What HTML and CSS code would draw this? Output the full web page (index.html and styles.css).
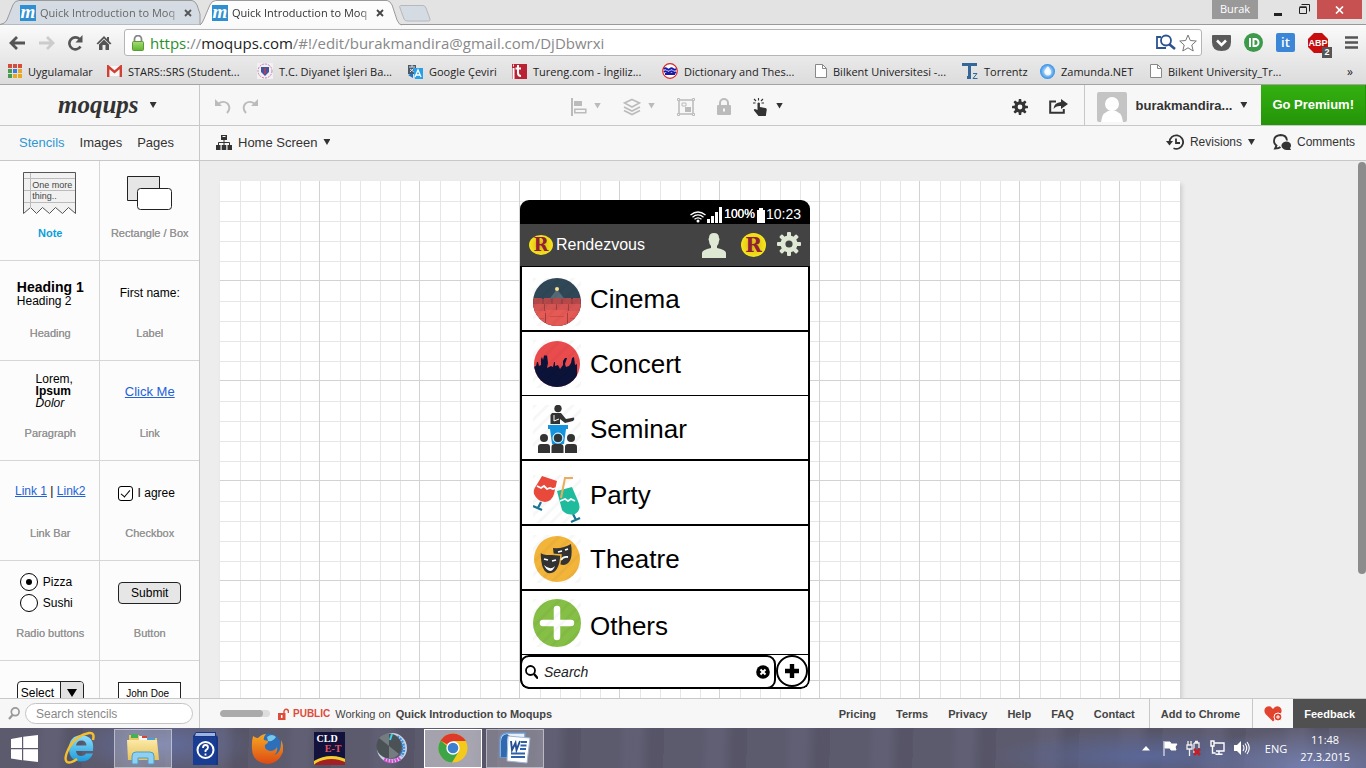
FILE: index.html
```html
<!DOCTYPE html>
<html lang="en">
<head>
<meta charset="utf-8">
<title>Quick Introduction to Moqups</title>
<link rel="stylesheet" href="styles.css">
</head>
<body>
<svg class="defs" aria-hidden="true">
  <defs>
    <linearGradient id="tabOn" x2="0" y2="1"><stop offset="0" stop-color="#fdfdfd"/><stop offset="1" stop-color="#fafafa"/></linearGradient>
    <radialGradient id="orb"><stop offset="0" stop-color="#fff"/><stop offset="1" stop-color="#2f8fe8"/></radialGradient>
    <linearGradient id="lock" x2="0" y2="1"><stop offset="0" stop-color="#a5dc78"/><stop offset="1" stop-color="#5fb62d"/></linearGradient>
    <linearGradient id="folder" x2="0" y2="1"><stop offset="0" stop-color="#fbe9a6"/><stop offset="1" stop-color="#e8c35c"/></linearGradient>
    <linearGradient id="iegrad" x2="0" y2="1"><stop offset="0" stop-color="#8fe0fb"/><stop offset="1" stop-color="#1b9bdc"/></linearGradient>
    <linearGradient id="ffgrad" x2="0" y2="1"><stop offset="0" stop-color="#f7a823"/><stop offset="1" stop-color="#dc4a14"/></linearGradient>
    <clipPath id="disc"><circle cx="24" cy="24" r="24"/></clipPath>
    <clipPath id="disc2"><circle cx="24" cy="24" r="23"/></clipPath>
    <pattern id="stripes" width="9" height="9" patternUnits="userSpaceOnUse" patternTransform="rotate(45)"><rect width="3" height="9" fill="#000" opacity=".03"/></pattern>
    <symbol id="page" viewBox="0 0 12 14"><path d="M.5.5h7l4 4v9H.5z" fill="#fff" stroke="#888"/><path d="M7.500.5v4h4" fill="none" stroke="#888"/></symbol>
    <symbol id="gear" viewBox="0 0 24 24"><g fill="currentColor"><rect x="10" width="4" height="24" rx="1"/><rect y="10" width="24" height="4" rx="1"/><rect x="10" width="4" height="24" rx="1" transform="rotate(45 12 12)"/><rect x="10" width="4" height="24" rx="1" transform="rotate(-45 12 12)"/></g><circle cx="12" cy="12" r="6" fill="none" stroke="currentColor" stroke-width="5"/><circle cx="12" cy="12" r="3.600" fill="var(--hole)"/></symbol>
  </defs>
</svg>

<header class="browser">
  <div class="tabstrip">
    <div class="tab">
      <svg class="tab-shape" viewBox="0 0 202 25" preserveAspectRatio="none"><path d="M0 24.500Q5 24 7 20L13 5Q15 .5 19 .5H194Q197 1 199 5L202 14V24.500" fill="#d5dbe3" stroke="#999"/></svg>
      <span class="favicon">m</span><span class="tab-title">Quick Introduction to Moq</span><button class="tab-x" aria-label="Close tab"><svg width="8" height="8" viewBox="0 0 8 8"><path d="M1 1l6 6M7 1L1 7" stroke="#555" stroke-width="1.800"/></svg></button>
    </div>
    <div class="tab tab-on">
      <svg class="tab-shape" viewBox="0 0 202 25" preserveAspectRatio="none"><path d="M0 25Q2 24 4 19L10 5Q12 .5 16 .5H189Q192 1 194 5L199 20Q201 25 204 25" fill="url(#tabOn)" stroke="#999"/></svg>
      <span class="favicon">m</span><span class="tab-title">Quick Introduction to Moq</span><button class="tab-x" aria-label="Close tab"><svg width="8" height="8" viewBox="0 0 8 8"><path d="M1 1l6 6M7 1L1 7" stroke="#444" stroke-width="1.800"/></svg></button>
    </div>
    <button class="newtab" aria-label="New tab"><svg width="34" height="17" viewBox="0 0 34 17"><path d="M2.500.5H25Q27 .5 28 3l4 11q.6 2-1.500 2H9Q7 16 6 14L2 3Q1 .5 2.500.5z" fill="#d5dbe3" stroke="#b5b8bd"/></svg></button>
    <div class="win">
      <span class="profile">Burak</span>
      <button class="wbtn" aria-label="Minimize"><svg width="8" height="12" viewBox="0 0 8 12"><path d="M0 9h8v3H0z" fill="#222"/></svg></button>
      <button class="wbtn" aria-label="Restore"><svg width="11" height="11" viewBox="0 0 11 11"><path d="M.5 3.500h7v6h-7zM.5 2.800h7M2.500.5h8v7" fill="none" stroke="#222"/></svg></button>
      <button class="wclose" aria-label="Close"><svg width="9" height="8" viewBox="0 0 9 8"><path d="M1 .5l7 7M8 .5l-7 7" stroke="#fff" stroke-width="1.700"/></svg></button>
    </div>
  </div>
  <div class="navbar">
    <button aria-label="Back"><svg width="17" height="16" viewBox="0 0 17 16"><path d="M8 2L2 8l6 6M2.500 8H16" fill="none" stroke="#555" stroke-width="2.800"/></svg></button>
    <button aria-label="Forward"><svg width="17" height="16" viewBox="0 0 17 16"><path d="M9 2l6 6-6 6M14.500 8H1" fill="none" stroke="#ccc" stroke-width="2.800"/></svg></button>
    <button aria-label="Reload"><svg width="17" height="16" viewBox="0 0 17 16"><path d="M13.500 11.500A6 6 0 1 1 12.500 4" fill="none" stroke="#555" stroke-width="2.600"/><path d="M15.500 0v7.500H8.500z" fill="#555"/></svg></button>
    <button aria-label="Home"><svg width="16" height="16" viewBox="0 0 16 16"><path d="M8 1L.5 8.500 2 9.500l6-6 6 6 1.500-1L13 6V2h-2v2z" fill="#555"/><path d="M3 9.500l5-5 5 5V15H9.500v-5h-3v5H3z" fill="#555"/></svg></button>
    <div class="omni">
      <svg width="12" height="16" viewBox="0 0 12 16"><path d="M2.500 7V4a3.500 3.500 0 0 1 7 0v3" fill="none" stroke="#888" stroke-width="1.800"/><rect x=".5" y="6.500" width="11" height="9" rx="1" fill="url(#lock)" stroke="#5a9a38"/></svg>
      <div class="url"><span class="sec">https</span>://<span class="host">moqups.com</span>/#!/edit/burakmandira@gmail.com/DjDbwrxi</div>
      <svg width="20" height="17" viewBox="0 0 20 17"><path d="M5 3H1v11h9" fill="none" stroke="#2d5290" stroke-width="1.800"/><circle cx="10" cy="6.500" r="5" fill="#fff" stroke="#2d5290" stroke-width="1.800"/><path d="M13 10l6 5" stroke="#2d5290" stroke-width="2.600"/></svg>
      <svg class="star" width="18" height="18" viewBox="0 0 18 18"><path d="M9 1l2.300 5.500 6 .5-4.500 4 1.400 6L9 13.800 3.800 17l1.400-6L.7 7l6-.5z" fill="#fff" stroke="#777"/></svg>
    </div>
    <div class="exts">
      <svg width="19" height="16" viewBox="0 0 19 16"><path d="M1 0h17q1 0 1 1v6q0 9-9.500 9T0 7V1q0-1 1-1z" fill="#5b5b5b"/><path d="M5 5.500l4.500 4.500L14 5.500" fill="none" stroke="#fff" stroke-width="2.500"/></svg>
      <svg width="19" height="19" viewBox="0 0 19 19"><circle cx="9.500" cy="9.500" r="9.500" fill="#3d9a4b"/><rect x="5" y="5" width="2" height="9" fill="#fff"/><path d="M9.500 6H11a3.500 3.500 0 0 1 0 7H9.500z" fill="none" stroke="#fff" stroke-width="2"/></svg>
      <span class="it">it</span>
      <span class="abp"><svg width="20" height="20" viewBox="0 0 20 20"><path d="M6 0h8l6 6v8l-6 6H6l-6-6V6z" fill="#c70d0d"/></svg><b>ABP</b><i>2</i></span>
      <svg class="menu" width="13" height="13" viewBox="0 0 13 13"><path d="M0 1.500h13M0 6.500h13M0 11.500h13" stroke="#555" stroke-width="2.600"/></svg>
    </div>
  </div>
  <nav class="bookmarks">
    <a href="#" class="w1"><svg width="14" height="14" viewBox="0 0 14 14"><g fill="#d34c3d"><path d="M0 0h4v4H0zM5 0h4v4H5zM10 0h4v4h-4z"/></g><path d="M0 5h4v4H0z" fill="#4a9b4f"/><path d="M5 5h4v4H5z" fill="#3b7de0"/><path d="M10 5h4v4h-4zM5 10h4v4H5zM10 10h4v4h-4z" fill="#e8a820"/><path d="M0 10h4v4H0z" fill="#4a9b4f"/></svg>Uygulamalar</a>
    <a href="#" class="w2"><svg width="15" height="12" viewBox="0 0 15 12"><path d="M2 1h11v10H2z" fill="#f7f7f7"/><path d="M1.200 12V1.500l6.300 5.500 6.300-5.500V12" fill="none" stroke="#cf4134" stroke-width="2.400"/></svg>STARS::SRS (Student...</a>
    <a href="#" class="w3"><svg width="16" height="16" viewBox="0 0 16 16"><path d="M0 0h16v16H0z" fill="#f5eef3"/><circle cx="8" cy="8" r="7" fill="none" stroke="#b88aa8" stroke-dasharray="2 1"/><path d="M4 4h8v5l-4 4-4-4z" fill="#43559b"/><path d="M7 5h2v6H7z" fill="#a14369"/></svg>T.C. Diyanet İşleri Ba...</a>
    <a href="#" class="w4"><svg width="16" height="15" viewBox="0 0 16 15"><path d="M1 1h8v9H1z" fill="#4c5a66"/><path d="M2 3h6M5 1v2M3 8l4-4M3 5l4 3" stroke="#dde" fill="none"/><path d="M1 11l5 3V9z" fill="#1b72c8"/><path d="M6 4h10v11H8z" fill="#2aa1e6"/><path d="M8 13l3-7 3 7M9 11h4" fill="none" stroke="#fff" stroke-width="1.300"/></svg>Google Çeviri</a>
    <a href="#" class="w5"><svg width="15" height="15" viewBox="0 0 15 15"><path d="M0 0h15v15H0z" fill="#b92334"/><path d="M1.500 4v11M1 1.500h1M6 1v8q0 3 3 3M3.500 4.500H9" stroke="#fff" stroke-width="2" fill="none"/></svg>Tureng.com - İngiliz...</a>
    <a href="#" class="w6"><svg width="16" height="16" viewBox="0 0 16 16"><circle cx="8" cy="8" r="7.300" fill="#fff" stroke="#d22" stroke-width="1.200"/><path d="M2 6q1.500-1.500 3 0t3 0 3 0 3 0M2 9q1.500-1.500 3 0t3 0 3 0 3 0M3 11h10" fill="none" stroke="#1a1aa8" stroke-width="1.800"/></svg>Dictionary and Thes...</a>
    <a href="#" class="w7"><svg width="12" height="14"><use href="#page"/></svg>Bilkent Universitesi -...</a>
    <a href="#" class="w8"><svg width="16" height="16" viewBox="0 0 16 16"><path d="M0 1.500h15M7.500 1v13M5 14.500h4" stroke="#336699" stroke-width="3"/><path d="M11 10.500h4l-4 5h4.500" fill="none" stroke="#336699"/></svg>Torrentz</a>
    <a href="#" class="w9"><svg width="15" height="15" viewBox="0 0 15 15"><circle cx="7.500" cy="7.500" r="7.500" fill="url(#orb)"/><path d="M8 2q-5 5-3 8 3 3 6 0 1-3-3-8z" fill="#fff" opacity=".8"/></svg>Zamunda.NET</a>
    <a href="#" class="w10"><svg width="12" height="14"><use href="#page"/></svg>Bilkent University_Tr...</a>
    <a href="#" class="more">»</a>
  </nav>
</header>

<div class="app">
  <aside class="side">
    <div class="brand"><span class="logo">moqups</span><i class="caret"></i></div>
    <nav class="side-tabs"><a href="#" class="on">Stencils</a><a href="#">Images</a><a href="#">Pages</a></nav>
    <div class="stencils">
      <div class="cell"><div class="demo"><div class="note"><svg width="54" height="43" viewBox="0 0 54 43"><path d="M.5 41.500V.5h52v41l-7-6-6 6-7-6-6 6-7-6-6 6-6-6z" fill="#f1f1f1" stroke="#555"/><path d="M7.500 1v35M1 6.500h51M1 18.500h51M1 30.500h51" stroke="#bbb"/></svg><span>One more<br>thing..</span></div></div><span class="name note-name">Note</span></div>
      <div class="cell"><div class="demo"><svg width="45" height="35" viewBox="0 0 45 35"><path d="M.5.5h32v24H.5z" fill="#e6e6e6" stroke="#222"/><rect x="10.500" y="12.500" width="34" height="21" rx="3" fill="#fff" stroke="#222"/></svg></div><span class="name">Rectangle / Box</span></div>
      <div class="cell"><div class="demo"><div class="heads"><b>Heading 1</b><span>Heading 2</span></div></div><span class="name">Heading</span></div>
      <div class="cell"><div class="demo">First name:</div><span class="name">Label</span></div>
      <div class="cell"><div class="demo raised"><div class="para">Lorem,<b>Ipsum</b><em>Dolor</em></div></div><span class="name">Paragraph</span></div>
      <div class="cell"><div class="demo raised"><a href="#" class="click">Click Me</a></div><span class="name">Link</span></div>
      <div class="cell"><div class="demo raised"><span><a href="#">Link 1</a> | <a href="#">Link2</a></span></div><span class="name">Link Bar</span></div>
      <div class="cell"><div class="demo"><label class="agree"><input type="checkbox" checked>I agree</label></div><span class="name">Checkbox</span></div>
      <div class="cell"><div class="demo"><div class="radios"><label><input type="radio" name="food" checked>Pizza</label><label><input type="radio" name="food">Sushi</label></div></div><span class="name">Radio buttons</span></div>
      <div class="cell"><div class="demo"><button class="submit">Submit</button></div><span class="name">Button</span></div>
      <div class="cell"><div class="demo"><div class="selwrap"><select class="sel" aria-label="Select"><option>Select</option></select><svg width="23" height="22" viewBox="0 0 23 22"><path d="M0 0h23v22H0z" fill="#e2e2e2"/><path d="M.5 0v22" stroke="#222"/><path d="M7 7h10l-5 8z"/></svg></div></div></div>
      <div class="cell"><div class="demo"><input class="john" aria-label="Name" value="John Doe"></div></div>
    </div>
    <div class="side-search"><svg width="12" height="13" viewBox="0 0 12 13"><circle cx="7.200" cy="4.800" r="3.900" fill="none" stroke="#999" stroke-width="1.700"/><path d="M4.500 8L1 12" stroke="#999" stroke-width="2.200"/></svg><input type="search" aria-label="Search stencils" placeholder="Search stencils"></div>
  </aside>

  <main class="main">
    <div class="toolbar">
      <div class="undo">
        <svg width="16" height="16" viewBox="0 0 16 16"><path d="M3 6Q8 2 12.500 5.500 16.500 10 12 15" fill="none" stroke="#bbb" stroke-width="1.900"/><path d="M0 1v7h7z" fill="#bbb"/></svg>
        <svg width="16" height="16" viewBox="0 0 16 16"><path d="M13 6Q8 2 3.500 5.500-.5 10 4 15" fill="none" stroke="#bbb" stroke-width="1.900"/><path d="M16 1v7H9z" fill="#bbb"/></svg>
      </div>
      <div class="tools">
        <span class="tool"><svg width="16" height="18" viewBox="0 0 16 18"><path d="M1 0v18" stroke="#bbb" stroke-width="2"/><path d="M3 3h8v5H3z" fill="#bbb"/><path d="M3.800 11.300h11v3.500h-11z" fill="none" stroke="#bbb" stroke-width="1.500"/></svg><i class="caret dim"></i></span>
        <span class="tool"><svg width="18" height="18" viewBox="0 0 18 18"><path d="M9 1.500L16.500 5 9 9 1.500 5zM1 9l8 4 8-4M1 12.500l8 4 8-4" fill="none" stroke="#bbb" stroke-width="1.600"/></svg><i class="caret dim"></i></span>
        <svg width="18" height="18" viewBox="0 0 18 18"><g fill="none" stroke="#bbb"><path d="M2 2h14v14H2z" stroke-width="1.500"/><path d="M5 5h4v3H5z"/><path d="M.5.5h2v2h-2zM15.500.5h2v2h-2zM.5 15.500h2v2h-2zM15.500 15.500h2v2h-2z" fill="#f7f7f7"/></g><path d="M8 9h6v5H8z" fill="#bbb"/></svg>
        <svg width="14" height="17" viewBox="0 0 14 17"><path d="M3 8V5a4 4 0 0 1 8 0v3" fill="none" stroke="#bbb" stroke-width="2"/><rect y="7" width="14" height="10" rx="1" fill="#bbb"/><path d="M7 10.500v3" stroke="#f7f7f7" stroke-width="2"/></svg>
        <span class="tool hand"><svg width="14" height="18" viewBox="0 0 14 18"><path d="M1 1l2 2M5.500 0v2.500M10 1L8 3M0 5h2.500M8.500 5H11" stroke="#333" stroke-width="1.100"/><path d="M4.500 5q1.200-1.200 2.400 0v4l5.500 1q1.600.4 1.300 2l-.9 6H5.500L1 12.500q-.5-1.500 1-1.500l2.500 1z" fill="#333"/></svg><i class="caret"></i></span>
      </div>
      <div class="acts">
        <svg class="tgear" width="16" height="16"><use href="#gear"/></svg>
        <svg width="19" height="15" viewBox="0 0 19 15"><path d="M7 2.500H1.200v11.300h13.600V10" fill="none" stroke="#333" stroke-width="2"/><path d="M12 0l7 5-7 5V7Q7 6.500 4.500 10 5 3.500 12 3z" fill="#333"/></svg>
      </div>
      <div class="user"><svg width="30" height="30" viewBox="0 0 30 30"><rect width="30" height="30" rx="2" fill="#c4c4c4"/><circle cx="15" cy="12" r="7" fill="#fff"/><path d="M4 30q1-11 11-12 10 1 11 12z" fill="#fff"/></svg><b>burakmandira...</b><i class="caret"></i></div>
      <button class="premium">Go Premium!</button>
    </div>
    <div class="subbar">
      <button class="screen"><svg width="16" height="15" viewBox="0 0 16 15"><path d="M5 0h6v5H5zM0 10h4.500v5H0zM5.700 10h4.600v5H5.700zM11.500 10H16v5h-4.500z" fill="#333"/><path d="M8 4v6M2.500 10V7.500h11V10" stroke="#333" fill="none"/><path d="M6.500 1.500h3" stroke="#f7f7f7"/></svg>Home Screen<i class="caret"></i></button>
      <div class="subright">
        <button><svg width="18" height="16" viewBox="0 0 18 16"><path d="M3.500 8a6.800 6.800 0 1 1 4 6.300" fill="none" stroke="#333" stroke-width="1.800"/><path d="M0 7h7l-3.500 4.500z" fill="#333"/><path d="M10 4.500V9h4" fill="none" stroke="#333" stroke-width="1.800"/></svg>Revisions<i class="caret"></i></button>
        <button><svg width="18" height="16" viewBox="0 0 18 16"><path d="M14 6.500Q13.500 1 7.500 1 1 1.500 1 7q0 3 2.500 4.500L2 14.500q4 0 5.500-1.500" fill="none" stroke="#333" stroke-width="1.800"/><path d="M13 7.500q5 .3 5 4 0 1.500-1 2.500l1 2q-5 .5-7.500-1-2.500-1.500-2-4 .7-3 4.500-3.500z" fill="#333"/></svg>Comments</button>
      </div>
    </div>
    <div class="stage">
      <div class="canvas">
        <section class="phone">
          <div class="status">
            <svg width="16" height="12" viewBox="0 0 16 12"><g fill="none" stroke="#fff" stroke-width="1.300"><path d="M.5 4Q8-2 15.500 4M2.500 6.200q5.500-4.500 11 0M4.500 8.300q3.500-3 7 0"/></g><circle cx="8" cy="10" r="1.500" fill="#fff"/></svg>
            <svg width="15" height="16" viewBox="0 0 15 16"><path d="M0 12h3v4H0zM4 9h3v7H4zM8 5h3v11H8zM12 0h3v16h-3z" fill="#fff"/></svg>
            <b>100%</b>
            <svg width="8" height="15" viewBox="0 0 8 15"><path d="M2 0h4v2h2v13H0V2h2z" fill="#fff"/></svg>
            <span>10:23</span>
          </div>
          <div class="appbar">
            <span class="rlogo">R</span><span class="apptitle">Rendezvous</span>
            <svg width="24" height="25" viewBox="0 0 24 25"><path d="M12 0q5 0 5 5 1 1 0 3-.3 4-2 5v2q9 2 9 5v5H0v-5q0-3 9-5v-2q-1.700-1-2-5-1-2 0-3 0-5 5-5z" fill="#dfe8d3"/></svg>
            <span class="rlogo rbig">R</span>
            <svg class="pgear" width="24" height="24"><use href="#gear"/></svg>
          </div>
          <ul class="rows">
            <li class="cinema"><svg width="48" height="48" viewBox="0 0 48 48"><g clip-path="url(#disc)"><path d="M0 0h48v48H0z" fill="#2f4757"/><path d="M24 11L10 30h28z" fill="#8897a0" opacity=".45"/><circle cx="24" cy="11" r="2" fill="#fbe08a"/><path d="M0 21h48v27H0z" fill="#a33f41"/><path d="M1 20h8v6H1zM11 20h7v6h-7zM20 20h8v6h-8zM30 20h8v6h-8zM40 20h7v6h-7z" fill="#b5494a"/><path d="M0 26h11v9H0zM12 26h11v9H12zM24 26h11v9H24zM36 26h12v9H36z" fill="#d35452"/><path d="M0 33h12v15H0zM13 32h21v16H13zM35 33h13v15H35z" fill="#e55a54"/><path d="M0 40h11v1H0zM17 38h14v1H17zM37 40h11v1H37z" fill="#cf4b49"/></g><path d="M0 0h48v48H0z" fill="url(#stripes)"/></svg>Cinema</li>
            <li class="concert"><svg width="48" height="48" viewBox="0 0 48 48"><g clip-path="url(#disc2)"><path d="M0 0h48v48H0z" fill="#ea4b4d"/><path d="M0 27l3-1 1-4 1 0 1 4 2-1 0-6 1-2 1 3 1-4 1-1 1 1 1-1 1 8-1 5 4-2 2 1 1-5 1 0 0 4 3-1 2 4 3-4 0-4 2-3 2 0-2 6 1 3 3-1 2-3 1-5 2-1 1 8 2-1v26H0z" fill="#0b1339"/></g><path d="M0 0h48v48H0z" fill="url(#stripes)"/></svg>Concert</li>
            <li><svg width="48" height="48" viewBox="0 0 48 48"><path d="M0 0h48v48H0z" fill="url(#stripes)"/><g fill="#333"><circle cx="25" cy="3.500" r="3.700"/><path d="M19 8h9l5 6 8-1.500q1 2-1 3.500l-8 2-5-4v5H17.500V10z"/></g><path d="M21 10v6l5-2" fill="none" stroke="#fff"/><path d="M15 20h20v4h-2l-2 15H19l-2-15h-2z" fill="#1593dd"/><circle cx="25" cy="33" r="5" fill="none" stroke="#fff"/><g fill="#333"><circle cx="11" cy="33" r="4"/><circle cx="25" cy="33" r="4"/><circle cx="38" cy="33" r="4"/><path d="M5 48v-6q0-3 3-3h6q3 0 3 3v6zM18.500 48v-6q0-3 3-3h6q3 0 3 3v6zM32 48v-6q0-3 3-3h6q3 0 3 3v6z"/></g></svg>Seminar</li>
            <li class="party"><svg width="48" height="48" viewBox="0 0 48 48"><path d="M0 0h48v48H0z" fill="url(#stripes)"/><path d="M9 1l15 5-3 13q-2 7-9 8Q4 26 1 19q-1-4 2-8z" fill="#e8493a"/><path d="M4 11l4 2 3-2 3 3 3-1 3 1 3-1" fill="none" stroke="#fff" stroke-width="1.800"/><path d="M8 27l-3 6M0 31l9 4M40 39l3 6M38 47l9-4" stroke="#1a7590" stroke-width="2.200"/><path d="M24 16l15-4 6 14q4 9-3 13-8 2-13-4z" fill="#1ebc9c"/><path d="M27 26l5-2 3 2 3-2 4 2" fill="none" stroke="#fff" stroke-width="1.800"/><path d="M28 23l4-20h8" fill="none" stroke="#edac5c" stroke-width="2"/></svg>Party</li>
            <li><svg width="48" height="48" viewBox="0 0 48 48"><circle cx="24" cy="24" r="23" fill="#f3b43a"/><path d="M20 13q10 1 18-4 3 19-7 21-10 0-11-17z" fill="#333"/><path d="M7 17q4 3 9 2l12 1q-1 19-12 19Q7 38 7 17z" fill="#333" stroke="#f3b43a" stroke-width="1.500"/><path d="M11 24l4 1M19 26l4-1M25 17l4-1M32 15l3-1" stroke="#fff" stroke-width="1.600"/><path d="M11 30q6 6 11 1-2 5-5 5-4-1-6-6z" fill="#fff"/><path d="M28 25q2-4 7-3" fill="none" stroke="#fff" stroke-width="1.800"/><path d="M0 0h48v48H0z" fill="url(#stripes)"/></svg>Theatre</li>
            <li class="last"><svg width="48" height="48" viewBox="0 0 48 48"><circle cx="24" cy="24" r="24" fill="#86bf46"/><path d="M24 10v28M10 24h28" stroke="#fff" stroke-width="6.500" stroke-linecap="round"/><path d="M0 0h48v48H0z" fill="url(#stripes)"/></svg>Others</li>
          </ul>
          <div class="phone-foot">
            <div class="psearch"><svg width="13" height="14" viewBox="0 0 13 14"><circle cx="5.500" cy="5.500" r="4.500" fill="none" stroke="#000" stroke-width="1.800"/><path d="M9 9l4 4.500" stroke="#000" stroke-width="2.400"/></svg><input aria-label="Search" placeholder="Search"><svg width="14" height="14" viewBox="0 0 14 14"><circle cx="7" cy="7" r="6.800"/><path d="M4.500 4.500l5 5M9.500 4.500l-5 5" stroke="#fff" stroke-width="2"/></svg></div>
            <button class="plus" aria-label="Add"><svg width="14" height="14" viewBox="0 0 14 14"><path d="M7 0v14M0 7h14" stroke="#000" stroke-width="4.400"/></svg></button>
          </div>
        </section>
      </div>
      <i class="vscroll"></i>
    </div>
    <footer class="foot">
      <i class="zoombar"><i></i></i>
      <svg width="11" height="12" viewBox="0 0 11 12"><path d="M6 6V3.500a2.200 2.200 0 0 1 4.400 0V5" fill="none" stroke="#dd4b39" stroke-width="1.400"/><path d="M0 5h7.500v7H0z" fill="#dd4b39"/><path d="M3.700 7v3" stroke="#fff" stroke-width="1.500"/></svg>
      <span class="public">PUBLIC</span><span>Working on</span><b class="proj">Quick Introduction to Moqups</b>
      <nav class="links"><a href="#">Pricing</a><a href="#">Terms</a><a href="#">Privacy</a><a href="#">Help</a><a href="#">FAQ</a><a href="#">Contact</a></nav>
      <a href="#" class="chrome-add">Add to Chrome</a>
      <a href="#" class="heart" aria-label="Like"><svg width="19" height="16" viewBox="0 0 19 16"><path d="M9 15.500L1.500 8Q-1 4 2 1.300 6-1.300 9 3q3-4.300 7-1.700Q19 4 16.500 8z" fill="#e2432e"/><circle cx="14" cy="11" r="4" fill="#e2432e" stroke="#fff"/><path d="M14 9v4M12 11h4" stroke="#fff"/></svg></a>
      <button class="feedback">Feedback</button>
    </footer>
  </main>
</div>

<div class="taskbar">
  <button class="start" aria-label="Start"><svg width="27" height="27" viewBox="0 0 27 27"><path d="M0 4l11-2v11H0zM12.200 1.800L27 0v13H12.200zM0 14.200h11v11L0 23.500zM12.200 14.200H27V27l-14.800-1.700z" fill="#fff"/></svg></button>
  <button class="task" aria-label="Internet Explorer"><svg width="34" height="34" viewBox="0 0 34 34"><path d="M7 20h22q2-15-11.500-16Q5 5 5 17.500t12 13q9 0 12-8h-7q-1.500 2.500-5 2.500-4.500 0-5-5M12 14.500q1-5 5.500-5t5 5z" fill="url(#iegrad)"/><path d="M29 9q2-8-4-7Q13 4 6 15-1 28 3 31q3 2 10-3" fill="none" stroke="#f5c02c" stroke-width="2.500"/></svg></button>
  <button class="task run" aria-label="File Explorer"><svg width="34" height="34" viewBox="0 0 34 34"><path d="M3 4h10l2 3h16v20H3z" fill="#e9c763"/><path d="M5 3h7v4H5z" fill="#46b058"/><path d="M13 5h8v4h-8z" fill="#f4f4f4"/><path d="M16 5h5v2h-5z" fill="#d9442c"/><path d="M21 7h8v4h-8z" fill="#4aa0dc"/><path d="M1 9h30l2 20H2z" fill="url(#folder)"/><path d="M6 33v-8q0-4 4-4h14q4 0 4 4v8h-6v-6H12v6z" fill="#8fd0f0" stroke="#4a9fce"/></svg></button>
  <button class="task" aria-label="Help"><svg width="26" height="33" viewBox="0 0 26 33"><path d="M4 0h20v3l2 2v28H1V4z" fill="#183683"/><path d="M4 1h19v3H3z" fill="#9db4de"/><path d="M1 5h23v28H1z" fill="#1a3d94"/><circle cx="13.500" cy="18" r="8" fill="none" stroke="#fff" stroke-width="2"/><path d="M11 16q0-3 2.500-3t2.500 2.500q0 1.500-2.500 3V20M13.500 21.500v2" fill="none" stroke="#fff" stroke-width="1.800"/></svg></button>
  <button class="task" aria-label="Firefox"><svg width="32" height="34" viewBox="0 0 32 34"><circle cx="17" cy="16" r="13.500" fill="#2d6fb8"/><path d="M16 6q5-4 9 0-3 5-8 4z" fill="#78c8ea"/><path d="M2 5q3 2 5 2 4-4 8-4-3 3-2 6l4 1q1 2-3 4-1 5 5 6 5 0 7-4 1 5-3 8 8-2 7-15 4 8 1 14-4 9-14 10Q4 32 1.500 22 0 13 2 5z" fill="url(#ffgrad)"/></svg></button>
  <button class="task" aria-label="CLD E-T"><span class="cld"><b>CLD</b><em>E-T</em><i></i></span></button>
  <button class="task" aria-label="Volume"><svg width="32" height="34" viewBox="0 0 32 34"><circle cx="17" cy="17" r="13" fill="none" stroke="#c8d4e4" stroke-width="4"/><path d="M22 6a13 13 0 0 1 4 19" fill="none" stroke="#3b91e0" stroke-width="3.500" stroke-dasharray="2 1"/><path d="M25 27a13 13 0 0 1-16 1" fill="none" stroke="#d34bd0" stroke-width="4" stroke-dasharray="2 1"/><circle cx="14" cy="15" r="12.500" fill="#4b5256"/><path d="M14 15L4 7q4-4.500 10-4.500zM14 15l10 8q-4 4.500-10 4.500z" fill="#747c80"/><path d="M15 9l2-6" stroke="#3dd3e8" stroke-width="2"/></svg></button>
  <button class="task run active" aria-label="Chrome"><svg width="30" height="30" viewBox="0 0 30 30"><circle cx="15" cy="15" r="14.500" fill="#f3c91c"/><path d="M15 15L2.500 7.500Q7 .5 15 .5T28 8H15z" fill="#dc3b2c"/><path d="M2.500 7.500q-4.500 8 0 15Q7 29.500 14 29.500L21 18h-6z" fill="#3da548"/><circle cx="15" cy="15" r="6.700" fill="#fff"/><circle cx="15" cy="15" r="5.300" fill="#3f7fd0"/></svg></button>
  <button class="task run" aria-label="Word"><svg width="32" height="32" viewBox="0 0 32 32"><path d="M7 1h19v24H1V8q0-6 6-7z" fill="#e8f1fb" stroke="#6c9ad0" stroke-width="1.500"/><path d="M2 25V9q0-6 6-7l3 2q-3 1-3 6v15z" fill="#2f69b2"/><path d="M9 4l22 2-3 25-20-2z" fill="#fff" stroke="#9fb6d2"/><path d="M22 10h6M21.500 13.500h6M21 17h6M12 21.500h14M12 25h14" stroke="#2e62aa" stroke-width="2"/><path d="M12 9l1 9 3.500-7 1 7L21 9" fill="none" stroke="#234f96" stroke-width="1.900"/></svg></button>
  <div class="tray">
    <svg width="8" height="5" viewBox="0 0 8 5"><path d="M0 4.500L4 0l4 4.500z" fill="#fff"/></svg>
    <svg width="16" height="16" viewBox="0 0 16 16"><path d="M2 1v15M3 2h5l1 2h6l-2 3 1 3H9L8 8H3z" fill="#fff" stroke="#fff"/></svg>
    <svg width="16" height="16" viewBox="0 0 16 16"><path d="M2 1v4M5 1v4M1 5h5v4H1zM3.500 9v7M8 3h5v5M8 3v10M9 1.500h3" fill="none" stroke="#eee" stroke-width="1.300"/><path d="M8 9l6 6M14 9l-6 6" stroke="#c22027" stroke-width="2.500"/></svg>
    <svg width="16" height="16" viewBox="0 0 16 16"><path d="M4 3h10v8H6M9 11v3M5.500 14.300h7M1 1h3v5H1zM2.500 6v7h3" fill="none" stroke="#fff" stroke-width="1.400"/></svg>
    <svg width="16" height="14" viewBox="0 0 16 14"><path d="M0 4h3l4-4v14l-4-4H0z" fill="#fff"/><path d="M9 4q2 3 0 6M11 2.500q3.500 4.500 0 9M13 1q4.500 6 0 12" fill="none" stroke="#fff" stroke-width="1.100"/></svg>
    <span class="lang">ENG</span>
    <span class="clock">11:48<br>27.3.2015</span>
  </div>
</div>
</body>
</html>
```
FILE: styles.css
```css
* { box-sizing: border-box; }
html, body { height: 100%; margin: 0; }
body { display: flex; flex-direction: column; overflow: hidden; font: 13px "Liberation Sans", Arial, sans-serif; color: #333; background: #ededed; }
button { border: 0; background: none; padding: 0; margin: 0; font: inherit; color: inherit; display: flex; align-items: center; }
input, select { font: inherit; color: inherit; margin: 0; }
a { color: inherit; text-decoration: none; }
svg { display: block; flex: none; }
.defs { position: absolute; width: 0; height: 0; }
.caret { width: 7px; height: 6px; background: #333; clip-path: polygon(0 0, 100% 0, 50% 100%); flex: none; }
.caret.dim { background: #bbb; }

/* browser chrome */
.browser { flex: none; font-family: "Open Sans", "Noto Sans", sans-serif; background: #e3e3e3; border-bottom: 1px solid #a3a3a3; }
.tabstrip { display: flex; align-items: flex-start; height: 25px; box-shadow: inset 0 -1px #999; }
.tab { position: relative; display: flex; align-items: center; width: 200px; height: 25px; padding: 0 8px 0 20px; color: #666; }
.tab-on { z-index: 1; padding: 0 16px 0 12px; color: #333; }
.tab-shape { position: absolute; left: 0; top: 0; width: 100%; height: 100%; overflow: visible; }
.tab > :not(.tab-shape) { position: relative; }
.favicon { width: 16px; height: 16px; background: #2f8fd0; color: #fff; font: italic bold 19px/13px "Liberation Serif", serif; text-align: center; flex: none; }
.tab-title { flex: 1; min-width: 0; margin: 0 2px 0 4px; font-size: 11px; white-space: nowrap; overflow: hidden; mask-image: linear-gradient(90deg, #000 90%, transparent); }
.newtab { margin: 5px 0 0 -2px; }
.win { margin-left: auto; display: flex; align-items: center; height: 19px; padding-right: 4px; }
.profile { width: 46px; height: 19px; background: #999; color: #fff; font-size: 11px; line-height: 18px; text-align: center; }
.wbtn { width: 26px; height: 19px; justify-content: center; }
.wbtn:nth-child(2) { margin-left: 7px; }
.wclose { width: 45px; height: 19px; background: #c75050; justify-content: center; }
.navbar { display: flex; align-items: center; height: 33px; padding: 2px 8px 0; background: linear-gradient(#fafafa, #e9e9e9); }
.navbar > button { width: 29px; height: 28px; }
.navbar > button:first-child { margin-left: 1px; }
.navbar > button:nth-child(4) { width: 28px; }
.omni { flex: 1; min-width: 0; display: flex; align-items: center; height: 27px; padding: 0 4px 0 7px; background: #fff; border: 1px solid #b5b5b5; border-radius: 3px; }
.url { flex: 1; margin-left: 6px; font-size: 15px; line-height: 24px; color: #888; white-space: nowrap; overflow: hidden; }
.sec { color: #2a8f2a; }
.host { color: #222; }
.star { margin-left: 3px; }
.exts { display: flex; align-items: center; gap: 13px; padding-left: 10px; }
.menu { margin-left: 4px; }
.it { width: 19px; height: 19px; border-radius: 2px; background: #3b86d6; color: #fff; font-size: 13px; font-weight: 600; line-height: 18px; text-align: center; }
.abp { position: relative; }
.abp b { position: absolute; inset: 0; font: bold 9px/20px "Liberation Sans", sans-serif; color: #fff; text-align: center; }
.abp i { position: absolute; right: -4px; bottom: -5px; width: 10px; height: 11px; background: #555; color: #fff; font: bold 9px/11px "Liberation Sans", sans-serif; text-align: center; }
.bookmarks { display: flex; align-items: center; height: 26px; padding: 0 13px 0 8px; font-size: 11px; color: #222; background: linear-gradient(#e9e9e9, #dcdcdc); }
.bookmarks a { display: flex; align-items: center; gap: 6px; white-space: nowrap; flex: none; }
.w1 { width: 99px; } .w2 { width: 150px; } .w3 { width: 150px; } .w4 { width: 105px; } .w5 { width: 150px; }
.w6 { width: 153px; } .w7 { width: 147px; } .w8 { width: 78px; } .w9 { width: 110px; }
.bookmarks .more { margin-left: auto; font-size: 12px; }

/* application */
.app { flex: 1; min-height: 0; display: flex; }
.side { width: 200px; flex: none; display: flex; flex-direction: column; background: #fcfcfc; border-right: 1px solid #c8c8c8; }
.brand { flex: none; height: 41px; display: flex; align-items: center; padding-left: 58px; gap: 11px; background: #f7f7f7; border-bottom: 1px solid #c8c8c8; }
.logo { font: italic bold 25px/36px "Liberation Serif", serif; height: 36px; color: #333; }
.side-tabs { flex: none; height: 35px; display: flex; align-items: center; gap: 15px; padding: 0 0 2px 19px; background: #f7f7f7; border-bottom: 1px solid #c8c8c8; }
.side-tabs .on { color: #2f96d2; }
.stencils { flex: 1; min-height: 0; overflow: hidden; display: grid; grid-template-columns: 1fr 1fr; grid-auto-rows: 100px; color: #000; font-size: 12px; }
.cell { display: flex; flex-direction: column; align-items: center; padding-left: 2px; border-right: 1px solid #d6d6d6; border-bottom: 1px solid #d6d6d6; }
.cell:nth-child(even) { border-right: 0; padding-left: 1px; }
.demo { height: 64px; display: flex; align-items: center; justify-content: center; }
.raised { padding-bottom: 4px; }
.name { font-size: 11px; line-height: 17px; color: #949494; text-shadow: 0 0 0 #949494; }
.note-name { color: #0a9fdb; font-weight: bold; text-shadow: none; }
.note { position: relative; }
.note span { position: absolute; left: 9px; top: 8px; font-size: 9px; line-height: 11px; color: #444; white-space: nowrap; }
.heads { display: flex; flex-direction: column; line-height: 14px; padding-top: 2px; }
.heads b { font-size: 14px; }
.para { display: flex; flex-direction: column; line-height: 12px; padding-left: 8px; }
.cell a { color: #2362d8; text-decoration: underline; }
.click { font-size: 13px; }
.agree, .radios label { display: flex; align-items: center; gap: 5px; }
.agree { padding-right: 7px; }
.agree input { appearance: none; width: 15px; height: 15px; border: 1px solid #000; border-radius: 3px; background: #fff; display: grid; place-items: center; }
.agree input::after { content: ""; width: 4px; height: 8px; margin-bottom: 2px; border: solid #000; border-width: 0 1px 1px 0; transform: rotate(40deg); }
.radios { display: flex; flex-direction: column; gap: 3px; padding: 0 8px 2px 0; }
.radios input { appearance: none; width: 18px; height: 18px; border: 1px solid #000; border-radius: 50%; background: #fff; display: grid; place-items: center; }
.radios input:checked::after { content: ""; width: 6px; height: 6px; border-radius: 50%; background: #000; }
.submit { width: 63px; height: 22px; justify-content: center; border: 1px solid #222; border-radius: 4px; background: #e6e6e6; }
.selwrap { display: flex; border: 1px solid #222; border-radius: 4px; overflow: hidden; background: #fff; }
.sel { appearance: none; border: 0; background: none; width: 42px; padding: 0 3px; }
.john { width: 63px; height: 23px; border: 1px solid #222; border-radius: 0; background: #fff; padding: 0 7px; font-size: 10px; }
.side-search { flex: none; height: 30px; display: flex; align-items: center; gap: 5px; padding: 0 6px 0 8px; border-top: 1px solid #c8c8c8; background: #f7f7f7; }
.side-search input { flex: 1; min-width: 0; height: 21px; border: 1px solid #c4c4c4; border-radius: 11px; padding: 0 10px; background: #fff; font-size: 12px; appearance: none; outline: 0; }
.side-search input::placeholder { color: #888; }

.main { flex: 1; min-width: 0; display: flex; flex-direction: column; }
.toolbar { flex: none; height: 41px; display: flex; align-items: center; background: #f7f7f7; border-bottom: 1px solid #c8c8c8; }
.undo { display: flex; gap: 11px; padding: 2px 0 0 15px; width: 371px; flex: none; }
.tools { display: flex; align-items: center; gap: 22px; padding-top: 3px; }
.tool { display: flex; align-items: center; gap: 7px; }
.tool .caret { margin-top: -2px; }
.hand { gap: 9px; }
.acts { display: flex; align-items: center; gap: 21px; margin-left: auto; padding: 3px 16px 0 0; }
.tgear { color: #333; --hole: #f7f7f7; }
.user { display: flex; align-items: center; height: 40px; padding: 0 14px 0 12px; border-left: 1px solid #c8c8c8; }
.user svg { margin-top: 3px; }
.user b { margin: 0 8px 0 9px; }
.premium { height: 40px; padding: 0 11px 2px; border-right: 1px solid #249408; background: linear-gradient(#34b010, #249408); color: #fff; font-weight: bold; }
.subbar { flex: none; height: 35px; display: flex; align-items: center; justify-content: space-between; padding: 0 11px 2px 16px; background: #f7f7f7; border-bottom: 1px solid #c8c8c8; }
.screen { gap: 6px; }
.subright { display: flex; gap: 18px; font-size: 12px; }
.subright button { gap: 6px; }
.stage { position: relative; flex: 1; min-height: 0; overflow: hidden; padding: 20px 186px 0 20px; background: #ededed; }
.canvas { --minor: #e6e6e6; --major: #d2d2d2; position: relative; height: 100%; background:
  repeating-linear-gradient(90deg, transparent 0 99px, var(--major) 99px 100px),
  repeating-linear-gradient(transparent 0 99px, var(--major) 99px 100px),
  repeating-linear-gradient(90deg, transparent 0 20px, var(--minor) 20px 21px, transparent 21px 40px, var(--minor) 40px 41px, transparent 41px 60px, var(--minor) 60px 61px, transparent 61px 80px, var(--minor) 80px 81px, transparent 81px 100px),
  repeating-linear-gradient(transparent 0 20px, var(--minor) 20px 21px, transparent 21px 40px, var(--minor) 40px 41px, transparent 41px 60px, var(--minor) 60px 61px, transparent 61px 80px, var(--minor) 80px 81px, transparent 81px 100px),
  #fff;
  box-shadow: 2px 3px 4px #ccc; }
.vscroll { position: absolute; right: 0; top: 1px; width: 8px; height: 412px; border-radius: 4px; background: #8c8c8c; }

/* phone mock-up placed on the free canvas */
.phone { position: absolute; left: 300px; top: 19px; width: 290px; background: #fff; border-radius: 9px; overflow: hidden; color: #000; }
.status { height: 24px; background: #000; color: #fff; display: flex; align-items: flex-end; justify-content: flex-end; gap: 1px; padding: 0 9px 2px 0; font-size: 14px; line-height: 15px; }
.status svg { margin-bottom: -1px; }
.status b { font-size: 12px; font-weight: normal; padding: 0 1px; text-shadow: 0 0 0 #fff; }
.appbar { height: 42px; background: #434343; color: #fff; display: flex; align-items: center; padding: 0 9px; }
.rlogo { width: 24px; height: 20px; border-radius: 50%; background: radial-gradient(#d8b516, #f6e51a 70%); color: #8f2036; font: bold 18px/20px "DejaVu Serif", serif; text-align: center; border: 0; }
.rbig { width: 25px; height: 24px; font-size: 20px; line-height: 24px; margin: 0 11px 0 15px; }
.apptitle { flex: 1; font-size: 16px; margin-left: 3px; }
.pgear { color: #dfe8d3; --hole: #434343; margin-bottom: 2px; }
.rows { list-style: none; margin: 0; padding: 0; border: solid #000; border-width: 1px 2px 0; }
.rows li { height: 65px; display: flex; align-items: center; gap: 9px; padding: 2px 0 0 11px; border-bottom: 2px solid #000; font-size: 26px; line-height: 30px; }
.rows .cinema { padding-top: 0; }
.cinema svg { margin-top: 6px; }
.rows .concert { height: 64px; padding-top: 0; border-bottom-width: 1px; }
.rows .party { padding-top: 4px; }
.party svg { margin-top: 8px; }
.rows .last { height: 64px; padding-top: 6px; border-bottom-width: 1px; }
.last svg { margin-bottom: 5px; }
.phone-foot { display: flex; height: 34px; border: solid #000; border-width: 0 2px 2px; border-radius: 0 0 9px 9px; }
.psearch { flex: 1; min-width: 0; display: flex; align-items: center; margin: 0 0 -2px -2px; padding: 0 4px 1px 3px; border: 2px solid #000; border-radius: 9px; }
.psearch input { flex: 1; min-width: 0; border: 0; background: none; outline: 0; padding: 0 6px; font-size: 14px; font-style: italic; }
.psearch input::placeholder { color: #222; }
.plus { width: 32px; height: 32px; border: 2px solid #000; border-radius: 50%; justify-content: center; }

.foot { flex: none; height: 30px; display: flex; align-items: center; background: #f7f7f7; border-top: 1px solid #c8c8c8; font-size: 11px; color: #444; white-space: nowrap; padding-left: 20px; }
.zoombar { width: 50px; height: 7px; border-radius: 4px; background: #ddd; margin-right: 8px; overflow: hidden; }
.zoombar i { display: block; width: 43px; height: 7px; border-radius: 4px; background: #aaa; }
.public { color: #dd4b39; margin: 0 5px 0 4px; font-size: 10px; font-weight: bold; }
.proj { margin-left: 5px; }
.links { margin-left: auto; display: flex; gap: 20px; padding-right: 14px; font-weight: bold; }
.chrome-add, .heart { height: 29px; display: flex; align-items: center; border-left: 1px solid #c8c8c8; padding: 0 12px 0 11px; font-weight: bold; }
.heart { padding: 0 10px 0 11px; }
.feedback { height: 29px; padding: 0 11px; background: #505050; color: #fff; font-weight: bold; }

/* desktop taskbar */
.taskbar { flex: none; height: 40px; display: flex; align-items: center; gap: 4px; background:
  radial-gradient(ellipse 120px 40px at 96% 100%, #7580b0, transparent),
  radial-gradient(ellipse 160px 26px at 84% 70%, #5b6798, transparent),
  radial-gradient(ellipse 90px 30px at 12% 40%, #626c9c, transparent),
  repeating-linear-gradient(92deg, #55546400 0 37px, #6a688055 45px 58px, #4b4a5a55 70px 83px),
  #5c5a6d; color: #fff; }
.start { width: 48px; height: 39px; padding-left: 11px; flex: none; }
.task { width: 58px; height: 39px; justify-content: center; flex: none; }
.run { background: #ffffff3a; border: 1px solid #ffffff70; }
.active { background: #ffffff70; border-color: #fff; }
.cld { position: relative; display: flex; flex-direction: column; width: 31px; height: 33px; overflow: hidden; background: #12123c; font: bold 10px/10px "Liberation Serif", serif; text-align: left; padding: 2px 3px 0; }
.cld em { font-style: normal; text-align: right; color: #e05560; }
.cld i { position: absolute; left: -6px; right: -10px; top: 24px; height: 30px; border: 3px solid #f1cf2d; border-radius: 50%; background: #a32025; }
.tray { margin-left: auto; display: flex; align-items: center; gap: 8px; padding-right: 16px; font: 11px/17px "Open Sans", "Noto Sans", sans-serif; }
.tray svg:first-child { margin-right: 4px; }
.lang { margin-left: 7px; }
.clock { text-align: center; margin-left: 5px; }
```
